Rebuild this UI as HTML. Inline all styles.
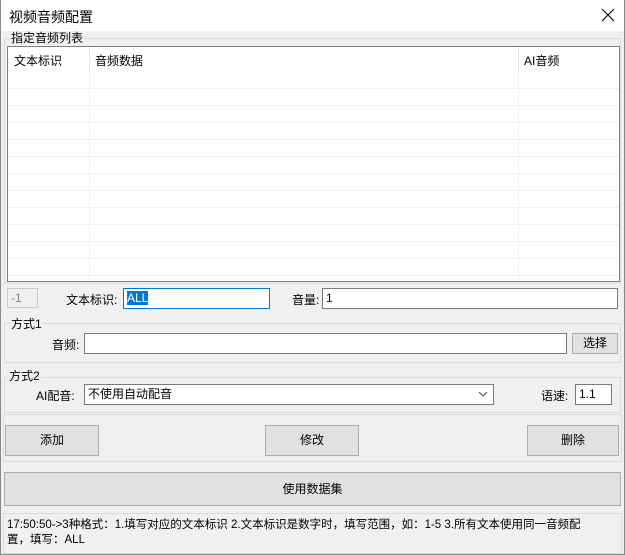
<!DOCTYPE html>
<html><head><meta charset="utf-8"><style>
*{box-sizing:border-box;margin:0;padding:0}
body{width:625px;height:555px;overflow:hidden;background:#f0f0f0;font-family:"Liberation Sans","Noto Sans CJK SC",sans-serif;font-size:12px;color:#000;position:relative}
.a{position:absolute}
.win{left:0;top:0;width:625px;height:555px;border:1px solid #888;border-top:none}
.title{left:1px;top:0;width:623px;height:31px;background:#fff}
.inp{position:absolute;background:#fff;border:1px solid #7a7a7a;padding:2px 3px;line-height:14px}
.btn{position:absolute;background:#e1e1e1;border:1px solid #adadad;text-align:center}
.grp{position:absolute;border:1px solid #dcdcdc}
.lbl{position:absolute;background:#f0f0f0;padding:0 1px;line-height:14px}
.hl{position:absolute;height:1px;background:#f0f0f0}
.vl{position:absolute;width:1px;background:#f0f0f0}
</style></head><body>
<div class="a title"></div>
<div class="a" style="left:9px;top:7px;font-size:14px">视频音频配置</div>
<svg class="a" style="left:601px;top:8px" width="14" height="14"><path d="M1 1L13 13M13 1L1 13" stroke="#000" stroke-width="1.1"/></svg>
<div class="a win"></div>

<div class="grp" style="left:4px;top:38px;width:617px;height:246px"></div>
<div class="lbl" style="left:10px;top:31px">指定音频列表</div>
<div class="a" style="left:7px;top:46px;width:613px;height:236px;background:#fff;border:1px solid #828282"></div>
<div class="vl" style="left:89px;top:47px;height:234px"></div>
<div class="vl" style="left:518px;top:47px;height:234px"></div>
<div class="a" style="left:8px;top:47px;width:611px;height:25px;background:#fff"></div>
<div class="vl" style="left:89px;top:47px;height:25px;background:#e5e5e5"></div>
<div class="vl" style="left:518px;top:47px;height:25px;background:#e5e5e5"></div>
<div class="a" style="left:14px;top:52px">文本标识</div>
<div class="a" style="left:95px;top:52px">音频数据</div>
<div class="a" style="left:524px;top:52px">AI音频</div>
<div class="hl" style="left:8px;top:88px;width:611px"></div>
<div class="hl" style="left:8px;top:105px;width:611px"></div>
<div class="hl" style="left:8px;top:122px;width:611px"></div>
<div class="hl" style="left:8px;top:139px;width:611px"></div>
<div class="hl" style="left:8px;top:156px;width:611px"></div>
<div class="hl" style="left:8px;top:173px;width:611px"></div>
<div class="hl" style="left:8px;top:190px;width:611px"></div>
<div class="hl" style="left:8px;top:207px;width:611px"></div>
<div class="hl" style="left:8px;top:224px;width:611px"></div>
<div class="hl" style="left:8px;top:241px;width:611px"></div>
<div class="hl" style="left:8px;top:258px;width:611px"></div>
<div class="hl" style="left:8px;top:275px;width:611px"></div>

<div class="inp" style="left:7px;top:288px;width:31px;height:20px;background:#f0f0f0;border-color:#ccc;color:#888">-1</div>
<div class="a" style="left:66px;top:291px">文本标识:</div>
<div class="inp" style="left:123px;top:288px;width:147px;height:21px;border-color:#0078d7"><span style="background:#0078d7;color:#fff">ALL</span></div>
<div class="a" style="left:292px;top:291px">音量:</div>
<div class="inp" style="left:322px;top:288px;width:296px;height:21px">1</div>

<div class="grp" style="left:4px;top:323px;width:617px;height:40px"></div>
<div class="lbl" style="left:10px;top:317px">方式1</div>
<div class="a" style="left:52px;top:336px">音频:</div>
<div class="inp" style="left:84px;top:333px;width:483px;height:21px"></div>
<div class="btn" style="left:572px;top:333px;width:46px;height:21px;line-height:19px">选择</div>

<div class="grp" style="left:4px;top:377px;width:617px;height:36px"></div>
<div class="lbl" style="left:8px;top:369px">方式2</div>
<div class="a" style="left:36px;top:387px">AI配音:</div>
<div class="inp" style="left:84px;top:384px;width:410px;height:21px">不使用自动配音</div>
<svg class="a" style="left:478px;top:391px" width="10" height="6"><path d="M1 1L5 5L9 1" stroke="#555" fill="none"/></svg>
<div class="a" style="left:541px;top:387px">语速:</div>
<div class="inp" style="left:575px;top:384px;width:37px;height:21px">1.1</div>

<div class="grp" style="left:3px;top:414px;width:619px;height:48px"></div>
<div class="btn" style="left:5px;top:425px;width:94px;height:31px;line-height:29px">添加</div>
<div class="btn" style="left:265px;top:425px;width:94px;height:31px;line-height:29px">修改</div>
<div class="btn" style="left:527px;top:425px;width:92px;height:31px;line-height:29px">删除</div>

<div class="btn" style="left:4px;top:472px;width:617px;height:34px;line-height:32px">使用数据集</div>

<div class="a" style="left:3px;top:513px;width:619px;height:41px;border:1px solid #dcdcdc"></div>
<div class="a" style="left:7px;top:518px;width:582px;line-height:15px;font-size:11.5px">17:50:50-&gt;3种格式：1.填写对应的文本标识 2.文本标识是数字时，填写范围，如：1-5 3.所有文本使用同一音频配置，填写：ALL</div>
</body></html>
